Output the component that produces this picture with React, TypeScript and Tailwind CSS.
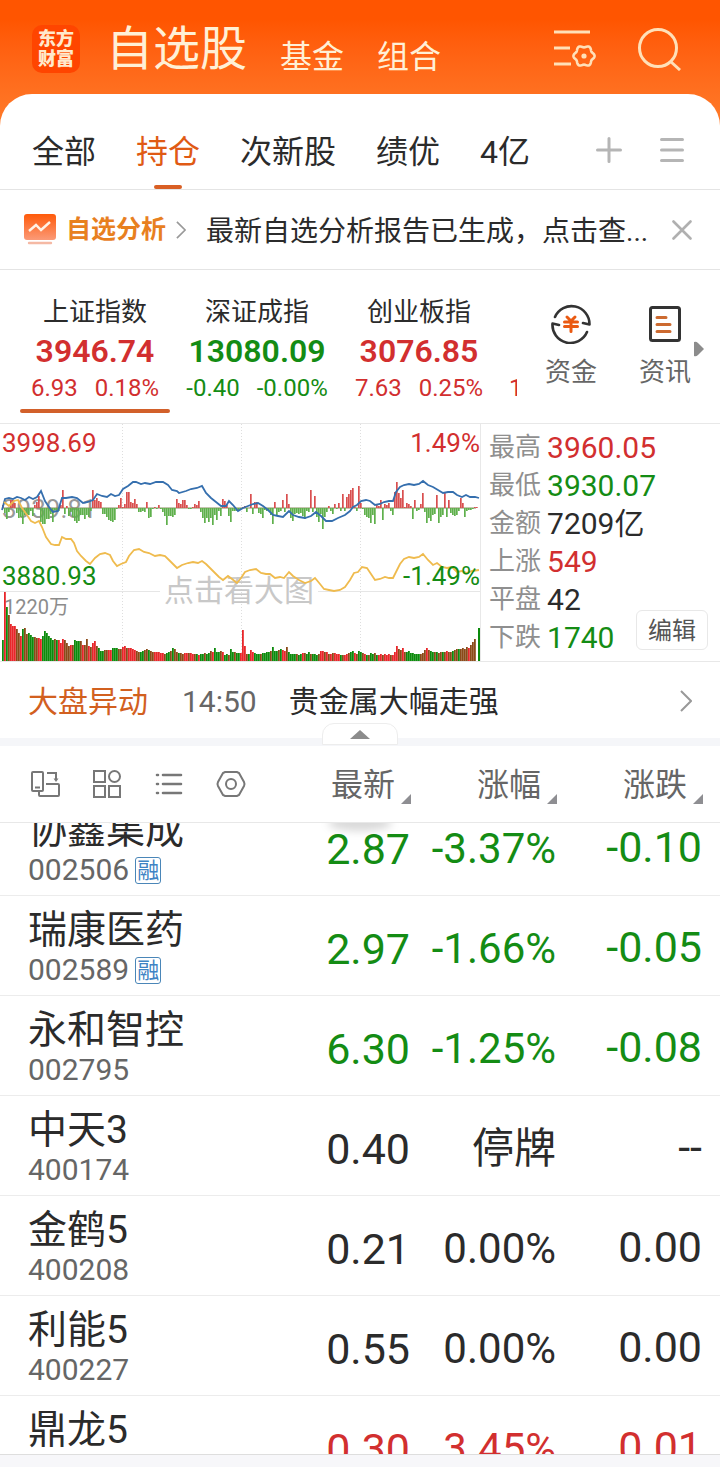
import React from 'react';
import { clsx } from 'clsx';

type Trend = 'up' | 'down' | 'flat';

interface Stock {
  name: string;
  code: string;
  margin?: boolean;
  price: string;
  percent: string;
  change: string;
  trend: Trend;
}

const trendColor: Record<Trend, string> = {
  up: 'text-[#d22f2f]',
  down: 'text-[#148c14]',
  flat: 'text-[#2b2b2b]',
};

const groups = ['全部', '持仓', '次新股', '绩优', '4亿'];

const indices = [
  { name: '上证指数', value: '3946.74', diff: '6.93', percent: '0.18%', trend: 'up' as Trend },
  { name: '深证成指', value: '13080.09', diff: '-0.40', percent: '-0.00%', trend: 'down' as Trend },
  { name: '创业板指', value: '3076.85', diff: '7.63', percent: '0.25%', trend: 'up' as Trend },
];

const stats = [
  { label: '最高', value: '3960.05', trend: 'up' as Trend },
  { label: '最低', value: '3930.07', trend: 'down' as Trend },
  { label: '金额', value: '7209亿', trend: 'flat' as Trend },
  { label: '上涨', value: '549', trend: 'up' as Trend },
  { label: '平盘', value: '42', trend: 'flat' as Trend },
  { label: '下跌', value: '1740', trend: 'down' as Trend },
];

const stocks: Stock[] = [
  { name: '协鑫集成', code: '002506', margin: true, price: '2.87', percent: '-3.37%', change: '-0.10', trend: 'down' },
  { name: '瑞康医药', code: '002589', margin: true, price: '2.97', percent: '-1.66%', change: '-0.05', trend: 'down' },
  { name: '永和智控', code: '002795', price: '6.30', percent: '-1.25%', change: '-0.08', trend: 'down' },
  { name: '中天3', code: '400174', price: '0.40', percent: '停牌', change: '--', trend: 'flat' },
  { name: '金鹤5', code: '400208', price: '0.21', percent: '0.00%', change: '0.00', trend: 'flat' },
  { name: '利能5', code: '400227', price: '0.55', percent: '0.00%', change: '0.00', trend: 'flat' },
  { name: '鼎龙5', code: '', price: '0.30', percent: '3.45%', change: '0.01', trend: 'up' },
];

// one entry per 2px step, bar height in px
const volume = [
  21, 69, 54, 46, 37, 35, 35, 32, 28, 25, 32, 33, 27, 28, 26, 24, 24, 23, 23, 22, 25, 30, 28, 25, 23, 21, 22, 21, 21, 18,
  22, 21, 18, 15, 16, 16, 21, 20, 20, 20, 16, 16, 22, 15, 14, 18, 20, 15, 13, 10, 10, 11, 11, 11, 11, 13, 13, 13, 12, 12,
  14, 15, 13, 13, 13, 12, 11, 10, 9, 9, 10, 11, 12, 11, 10, 9, 9, 9, 9, 8, 8, 7, 8, 9, 10, 13, 12, 9, 8, 8,
  7, 8, 8, 8, 8, 7, 7, 7, 6, 7, 7, 8, 7, 8, 10, 9, 13, 9, 9, 10, 9, 6, 7, 6, 12, 9, 9, 8, 8,
  8, 31, 15, 7, 7, 11, 9, 8, 7, 7, 7, 8, 8, 9, 9, 10, 14, 10, 10, 11, 12, 11, 10, 14, 9, 7, 7, 7, 7, 6, 7,
  8, 8, 7, 9, 7, 7, 7, 6, 7, 10, 10, 9, 9, 7, 7, 8, 8, 7, 7, 6, 6, 6, 7, 8, 9, 10, 8, 7, 10, 9,
  8, 7, 6, 6, 8, 7, 8, 6, 6, 7, 6, 7, 6, 7, 6, 6, 9, 15, 12, 11, 13, 9, 9, 10, 8, 8, 7, 7, 7, 7,
  8, 11, 13, 11, 10, 9, 9, 9, 8, 9, 9, 9, 10, 9, 9, 10, 11, 12, 12, 12, 13, 12, 14, 13, 16, 19, 22, 2,
];

// r = rise, g = fall, m = mixed
const volumeKind =
  'grgmrrrmmrgmmgggmmrrggggggmgrrrmmmrmgggmrmmrmrrmgggmmrrgggmmrrmrrrrmmggmmgmmrrrrrmggmgmmgmmrrmrrmgrggmggmrgggmrggmgg' +
  'mggrrrmgrrgggmggggmgggmgrrmggggmggrmggmgggmrrmrmrmrrrgmrrmggrmggmrgmggmgrrmrrrmrrrmmrmgggggggmmmrmggmgmmgmrmmgmmgmmmmr';

// strength around the zero line: positive up, negative down
const strength = [
  3, -5, -11, -4, 8, 8, 5, -5, -10, -9, -16, -7, -6, -7, -3, -8, 3, 6, 12, -14, -16, -16, -11, -11, -6, -14, -2, -3, -3, 3,
  18, -6, 2, -8, -4, -9, -13, -15, -13, -7, -7, -11, -7, -9, -3, 18, 8, 10, 7, 6, -6, -6, -9, -12, -13, -14, -12, -1, 3, 10,
  1, 4, 16, 16, 6, 5, 9, 4, -4, -4, -3, -4, 6, -10, -9, -1, 1, -1, 3, -1, -4, -8, -17, -8, -8, -9, -7, 9, 5, 4,
  8, 8, 3, -1, -1, 1, 4, 3, 7, -4, -10, -15, -10, -14, -10, -17, -7, -12, -3, -8, 9, 7, 3, -8, -14, -3, -3, -3, -3, -1,
  1, 2, -4, 0, 14, -6, 6, 6, -5, -6, -10, -2, -3, -3, -7, -16, 6, -8, -4, -3, 8, -4, 14, 4, -10, -13, -6, -5, -6, -5,
  -8, -11, -3, -4, 18, -4, 12, -9, -14, -6, -21, -9, -4, 2, -3, -6, 4, -1, 5, -3, 14, -3, 11, 14, 18, 20, 1, -3, 22, 5,
  -1, -7, -9, -10, -15, -7, -16, 3, 2, 8, -12, 4, 3, 5, -3, -7, 16, 26, 15, 10, 18, 1, 5, 4, 2, -11, 8, -3, -2, 4,
  15, -4, -15, -10, -13, -7, -6, 13, -15, -9, -7, 15, -9, 8, -5, -7, -8, -7, -3, 10, 5, -9, -3, -2, -2, -1, 1, 1,
];

const blueLine =
  '2,86 5,75 9,74 13,75 17,73 21,74 25,76 29,73 33,75 37,73 41,67 45,77 49,83 53,88 58,87 62,74 66,74 72,73 77,74 83,79 88,78 93,76 97,70 102,72 107,73 111,70 115,72 119,71 123,65 128,62 133,58 136,58 141,60 145,59 150,60 156,58 163,58 168,61 172,66 177,67 179,69 186,67 191,65 197,64 202,62 206,69 211,74 216,78 221,82 226,82 229,77 233,81 238,87 243,84 248,82 253,80 258,79 263,82 268,86 273,91 278,92 283,93 289,87 293,91 299,93 305,94 311,92 316,88 321,92 326,97 332,97 338,94 345,91 350,87 353,83 357,81 361,77 366,76 370,77 375,81 380,80 384,78 389,77 393,77 396,68 400,63 404,61 409,60 414,61 419,60 423,57 428,61 433,63 438,66 443,69 448,68 453,68 457,71 462,73 466,71 470,73 475,73 479,74';
const yellowLine =
  '4,78 9,82 14,77 18,76 22,84 27,91 31,97 35,99 39,97 42,103 46,113 51,120 55,121 59,121 62,113 66,115 71,115 74,119 77,127 81,132 86,137 90,140 95,134 100,130 105,129 110,131 113,137 117,142 121,140 126,138 129,132 134,126 139,125 144,128 149,129 155,132 160,131 165,132 169,136 173,140 177,144 182,141 188,139 193,138 198,139 202,137 206,140 210,144 215,149 219,153 223,156 228,152 232,155 237,159 241,154 245,148 250,146 256,145 261,149 266,150 270,150 275,154 280,153 284,154 289,148 293,152 299,156 305,159 311,157 315,154 320,160 324,165 329,166 334,167 340,166 345,163 350,156 354,149 358,148 362,143 367,144 371,150 375,156 380,155 385,153 389,154 393,154 397,146 400,140 404,135 409,133 414,134 419,133 423,130 428,136 433,141 437,139 442,143 447,144 452,143 457,148 462,147 467,149 472,147 479,146';

// six rounded teeth, sampled round the circle
const gearPoints = Array.from({ length: 72 }, (_, i) => {
  const angle = (i * Math.PI) / 36;
  const radius = 9.6 + Math.cos(angle * 6);
  return `${(31 + radius * Math.cos(angle)).toFixed(1)},${(28 + radius * Math.sin(angle)).toFixed(1)}`;
}).join(' ');

function SortSettingsIcon() {
  return (
    <svg width="44" height="42" viewBox="0 0 44 42" fill="none" stroke="#ffe0b8" strokeWidth="3">
      <path d="M1 4h36M1 20h16M1 36h17" />
      <polygon points={gearPoints} strokeLinejoin="round" strokeWidth="2.600" />
      <circle cx="31" cy="28" r="2.600" fill="#ffe0b8" stroke="none" />
    </svg>
  );
}

function SearchIcon() {
  return (
    <svg width="46" height="44" viewBox="0 0 46 44" fill="none" stroke="#ffe0b8" strokeWidth="3">
      <circle cx="21" cy="21" r="18.500" />
      <path d="M33 34l10 9" />
    </svg>
  );
}

function ReportIcon() {
  return (
    <svg width="32" height="32" viewBox="0 0 32 32" fill="none">
      <defs>
        <linearGradient id="report" x1="0" y1="0" x2="0" y2="1">
          <stop offset="0" stopColor="#ff5a0a" />
          <stop offset="1" stopColor="#fb9a78" />
        </linearGradient>
      </defs>
      <rect width="32" height="26" rx="3" fill="url(#report)" />
      <path d="M5 17l7-6 5 5 9-8" stroke="#fff3e6" strokeWidth="2.400" />
      <path d="M5 29h22" stroke="#f5b9a4" strokeWidth="2.400" strokeLinecap="round" />
    </svg>
  );
}

function FundsIcon() {
  return (
    <svg width="40" height="40" viewBox="0 0 40 40" fill="none" strokeLinecap="round" strokeLinejoin="round">
      <path d="M4 13A18 18 0 0 1 38.500 20.500L32 19M36 28A18 18 0 0 1 1.500 19.500L8 21" stroke="#333" strokeWidth="2.600" />
      <path d="M16 13l4 4 4-4M13.500 18h13M13.500 22.500h13M20 17v10.500" stroke="#ea5a12" strokeWidth="3" />
    </svg>
  );
}

function NewsIcon() {
  return (
    <svg width="34" height="40" viewBox="0 0 34 40" fill="none" strokeLinecap="round">
      <rect x="2.500" y="3.500" width="29" height="33" rx="2" stroke="#333" strokeWidth="3" />
      <path d="M9 13.500h9M9 20.500h13M9 27.500h13" stroke="#cc6a30" strokeWidth="3" />
    </svg>
  );
}

function ChevronRight({ className }: { className?: string }) {
  return (
    <svg className={className} viewBox="0 0 12 22" fill="none" stroke="#999" strokeWidth="2">
      <path d="M1 1l10 10L1 21" />
    </svg>
  );
}

const tools = [
  {
    label: '横竖屏',
    icon: (
      <>
        <rect x="1" y="2" width="11" height="19" rx="1" />
        <path d="M4 17.500h5M16 3h9v7M15 14h12q1 0 1 1v10q0 1-1 1H9q-1 0-1-1v-3" />
        <path d="M22.500 8.500h5L25 12z" fill="#777" stroke="none" />
      </>
    ),
  },
  {
    label: '宫格',
    icon: (
      <>
        <rect x="1" y="1" width="11" height="11" />
        <circle cx="21.500" cy="6.500" r="5.500" />
        <rect x="1" y="16" width="11" height="11" />
        <rect x="16" y="16" width="11" height="11" />
      </>
    ),
  },
  {
    label: '列表',
    icon: (
      <path d="M2 5h1M2 14h1M2 23h1M8 5h18M8 14h18M8 23h18" strokeWidth="2.600" strokeLinecap="round" />
    ),
  },
  {
    label: '设置',
    icon: (
      <>
        <path d="M8 2h12l2 1 5 9q1 2 0 4l-5 9-2 1H8l-2-1-5-9q-1-2 0-4l5-9z" />
        <circle cx="14" cy="14" r="5" />
      </>
    ),
  },
];

function IndexChart() {
  return (
    <button type="button" className="relative block h-[237px] min-w-0 flex-1 overflow-hidden border-r border-[#e8e8e8] text-left text-[26px] leading-9">
      <svg className="absolute inset-0 h-full w-full" viewBox="0 0 480 237" preserveAspectRatio="none" fill="none">
        <path d="M122.500 0v237M241.500 0v237M360.500 0v237" stroke="#dedede" strokeDasharray="1 2" />
        <path d="M0 167.500h160M318 167.500h162" stroke="#e6e6e6" />
      </svg>
      <span className="absolute top-[67px] left-[2px] text-[#999]">3939.81</span>
      <span className="absolute top-[145px] left-[164px] text-[30px] leading-[44px] text-[#c8c8c8]">点击看大图</span>
      <span className="absolute top-[169px] left-1 text-[20px] leading-7 text-[#8c8c8c]">1220万</span>
      <svg className="absolute inset-0 h-full w-full" viewBox="0 0 480 237" preserveAspectRatio="none" fill="none">
        <path d="M2 84h474" stroke="#8a8a60" />
        {strength.map((v, i) => (
          <rect
            key={i}
            x={2 + i * 2}
            y={v > 0 ? 84 - v : 84}
            width="1.700"
            height={Math.abs(v)}
            fill={v > 0 ? '#d94f4f' : '#5fb04c'}
          />
        ))}
        {volume.slice(0, 237).map((v, i) => (
          <rect
            key={i}
            x={2 + i * 2}
            y={237 - v}
            width="1.800"
            height={v}
            fill={volumeKind[i] === 'r' ? '#e8262a' : volumeKind[i] === 'g' ? '#0c8a0c' : '#8a4a18'}
          />
        ))}
        <rect x="478" y="204" width="2" height="33" fill="#0c8a0c" />
        <polyline points={blueLine} stroke="#356fae" strokeWidth="1.800" />
        <polyline points={yellowLine} stroke="#efbb4e" strokeWidth="1.800" />
      </svg>
      <span className="absolute top-px left-[2px] text-[#d22f2f]">3998.69</span>
      <span className="absolute top-px right-0 text-[#d22f2f]">1.49%</span>
      <span className="absolute top-[134px] left-[2px] text-[#148c14]">3880.93</span>
      <span className="absolute top-[134px] right-0 text-[#148c14]">-1.49%</span>
    </button>
  );
}

function SortHeader({ children }: { children: React.ReactNode }) {
  return (
    <th className="w-[146px] pt-[2px] font-normal">
      <button type="button" className="relative w-full pr-4 text-right text-[32px] leading-[48px] text-[#666]">
        {children}
        <svg className="absolute right-0 bottom-[5px] h-[10px] w-[10px]" viewBox="0 0 10 10" fill="#8e8e92">
          <path d="M10 0v10H0z" />
        </svg>
      </button>
    </th>
  );
}

function StockRow({ stock }: { stock: Stock }) {
  return (
    <tr className="flex h-[100px] border-b border-[#ececec] pr-[18px] pl-7 first:-mt-[27px]">
      <td className="min-w-0 flex-1 pt-[10px]">
        <div className="truncate text-[39px] leading-[48px] text-[#2b2b2b]">{stock.name}</div>
        <div className="flex items-center gap-[6px] text-[30px] leading-8 text-[#666]">
          {stock.code}
          {stock.margin && (
            <span className="rounded-[3px] border border-[#4a86b8] px-px text-[22px] leading-[25px] text-[#3f83c4]">融</span>
          )}
        </div>
      </td>
      <td className={clsx('w-[146px] pt-[6px] text-right text-[43px] leading-[94px]', trendColor[stock.trend])}>{stock.price}</td>
      <td className={clsx('w-[146px] pt-[6px] text-right text-[42px] leading-[94px]', trendColor[stock.trend])}>{stock.percent}</td>
      <td className={clsx('w-[146px] pt-1 text-right text-[43px] leading-[94px]', trendColor[stock.trend])}>{stock.change}</td>
    </tr>
  );
}

export default function App() {
  return (
    <div className="flex h-screen flex-col overflow-hidden bg-white font-[Roboto,'Noto_Sans_CJK_SC',sans-serif] text-[#2b2b2b]">
      <div className="bg-linear-to-b from-[#ff5500] from-10% to-[#ff7a28] to-65%">
        <header className="flex h-[94px] items-center pt-1 pr-[37px] pl-8">
          <div className="flex h-12 w-12 flex-col items-center justify-center rounded-[10px] bg-[#ff4500] text-[18px] leading-5 font-black text-[#ffe9cc]">
            <span>东方</span>
            <span>财富</span>
          </div>
          <nav className="ml-[26px] flex flex-1 items-end gap-[33px] text-[32px] leading-9 text-[#fff0d6]">
            <a href="#watchlist" className="text-[47px] leading-[52px]">自选股</a>
            <a href="#funds">基金</a>
            <a href="#portfolio">组合</a>
          </nav>
          <div className="flex items-center gap-10">
            <button type="button" aria-label="排序设置"><SortSettingsIcon /></button>
            <button type="button" aria-label="搜索"><SearchIcon /></button>
          </div>
        </header>

        <div className="flex h-24 items-center rounded-t-[32px] border-b border-[#e4e4e4] bg-white pr-9 pl-8">
          <div className="flex h-full flex-1 gap-10 text-[32px] leading-[48px]">
            {groups.map((group) => (
              <button key={group} type="button" className={clsx('relative pt-5', group === '持仓' && 'text-[#e05a14]')}>
                {group}
                {group === '持仓' && (
                  <span className="absolute bottom-0 left-1/2 h-1 w-7 -translate-x-1/2 rounded-full bg-[#d95f24]" />
                )}
              </button>
            ))}
          </div>
          <div className="mt-4 flex items-center gap-[38px]">
            <button type="button" aria-label="添加分组">
              <svg width="26" height="26" viewBox="0 0 26 26" stroke="#b5b5b5" strokeWidth="3" strokeLinecap="round">
                <path d="M13 1.500v23M1.500 13h23" />
              </svg>
            </button>
            <button type="button" aria-label="管理分组">
              <svg width="24" height="26" viewBox="0 0 24 26" stroke="#b5b5b5" strokeWidth="3" strokeLinecap="round">
                <path d="M1.500 2.500h21M1.500 13h21M1.500 23.500h21" />
              </svg>
            </button>
          </div>
        </div>
      </div>

      <section className="flex h-20 shrink-0 items-center border-b border-[#e4e4e4] pr-7 pl-6">
        <ReportIcon />
        <a href="#analysis" className="ml-[10px] flex items-center gap-[10px] text-[25px] font-bold text-[#e8801f]">
          自选分析
          <ChevronRight className="h-[18px] w-[10px]" />
        </a>
        <p className="ml-5 min-w-0 flex-1 pt-1 text-[28px] whitespace-nowrap">最新自选分析报告已生成，点击查...</p>
        <button type="button" aria-label="关闭">
          <svg width="20" height="20" viewBox="0 0 20 20" stroke="#b0b0b0" strokeWidth="2.600" strokeLinecap="round">
            <path d="M1.500 1.500l17 17M18.500 1.500l-17 17" />
          </svg>
        </button>
      </section>

      <section className="flex h-[154px] shrink-0 border-b border-[#e8e8e8]">
        <div className="mr-[28px] flex min-w-0 flex-1 overflow-hidden pl-[14px]">
          {indices.map((item, i) => (
            <button key={item.name} type="button" className="relative flex w-[162px] shrink-0 flex-col items-center pt-6">
              <span className="text-[26px] leading-9">{item.name}</span>
              <span className={clsx('text-[32px] leading-[42px] font-semibold', trendColor[item.trend])}>{item.value}</span>
              <span className={clsx('flex gap-[17px] text-[24px] leading-8', trendColor[item.trend])}>
                <span>{item.diff}</span>
                <span>{item.percent}</span>
              </span>
              {i === 0 && <span className="absolute inset-x-[6px] bottom-[10px] h-1 rounded-full bg-[#d2602a]" />}
            </button>
          ))}
          <span className="shrink-0 pt-[102px] pl-[9px] text-[24px] leading-8 text-[#d22f2f]">1</span>
        </div>
        <div className="flex pt-[34px] pr-[15px] text-[26px] leading-9 text-[#666]">
          <button type="button" className="flex flex-col items-center gap-[10px]">
            <FundsIcon />
            资金
          </button>
          <button type="button" className="ml-[42px] flex flex-col items-center gap-[10px]">
            <NewsIcon />
            资讯
          </button>
          <svg className="mt-[37px] ml-[2px] h-4 w-[12px]" viewBox="0 0 12 16" fill="#8c8c8c">
            <path d="M1 1q2-1 4 1l6 6-6 6q-2 2-4 1z" />
          </svg>
        </div>
      </section>

      <section className="flex shrink-0 border-b border-[#e8e8e8]">
        <IndexChart />
        <div className="relative w-[239px] pt-[4px] pl-2">
          <dl>
            {stats.map((item) => (
              <div key={item.label} className="flex h-[38px] items-center gap-[6px]">
                <dt className="text-[26px] text-[#8f8f8f]">{item.label}</dt>
                <dd className={clsx('text-[30px]', trendColor[item.trend])}>{item.value}</dd>
              </div>
            ))}
          </dl>
          <button
            type="button"
            className="absolute right-3 bottom-[11px] h-10 rounded-md border border-[#e8e8e8] bg-white px-[11px] pt-[2px] text-[24px] leading-9 text-[#555]"
          >
            编辑
          </button>
        </div>
      </section>

      <section className="relative shrink-0 border-b-8 border-[#f5f6f9]">
        <a href="#alert" className="flex h-[76px] items-center pt-[2px] pr-7 pl-7 text-[30px]">
          <span className="text-[#d2601f]">大盘异动</span>
          <span className="ml-[34px] text-[#666]">14:50</span>
          <span className="ml-8 flex-1">贵金属大幅走强</span>
          <ChevronRight className="h-[22px] w-3" />
        </a>
        <button
          type="button"
          aria-label="收起"
          className="absolute -bottom-[7px] left-1/2 flex h-[22px] w-[76px] -translate-x-1/2 items-center justify-center rounded-t-[12px] border border-[#ededed] bg-white"
        >
          <svg width="20" height="9" viewBox="0 0 20 9" fill="#8c8c8c">
            <path d="M10 0l10 9H0z" />
          </svg>
        </button>
      </section>

      <table className="flex min-h-0 flex-1 flex-col">
        <thead className="block">
          <tr className="flex h-[77px] items-center border-b border-[#e8e8e8] pr-[17px] pl-[31px]">
            <th className="flex min-w-0 flex-1 gap-[34px] font-normal">
              {tools.map((tool) => (
                <button key={tool.label} type="button" aria-label={tool.label}>
                  <svg width="28" height="28" viewBox="0 0 28 28" fill="none" stroke="#777" strokeWidth="2" className="overflow-visible">
                    {tool.icon}
                  </svg>
                </button>
              ))}
            </th>
            <SortHeader>最新</SortHeader>
            <SortHeader>涨幅</SortHeader>
            <SortHeader>涨跌</SortHeader>
          </tr>
        </thead>
        <tbody className="relative block min-h-0 flex-1 overflow-hidden before:absolute before:-top-2 before:left-1/2 before:h-4 before:w-16 before:-translate-x-1/2 before:rounded-[50%] before:bg-black/15 before:blur-xs">
          {stocks.map((stock) => (
            <StockRow key={stock.name} stock={stock} />
          ))}
        </tbody>
      </table>

      <footer className="h-[13px] shrink-0 border-t border-[#dedede] bg-[#f7f7fa]" />
    </div>
  );
}
